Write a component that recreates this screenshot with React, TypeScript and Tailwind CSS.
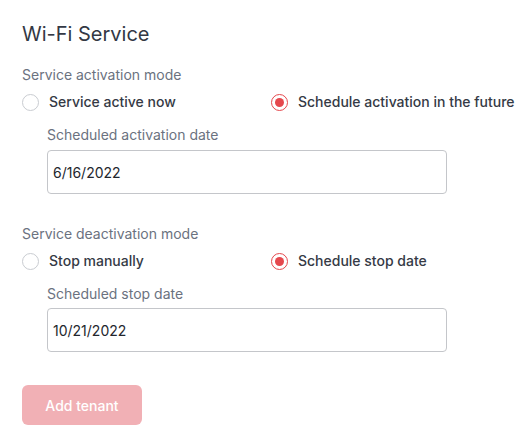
import React from "react";

function Radio({ checked, label }: { checked: boolean; label: string }) {
  return (
    <div className="flex items-center gap-[10px]">
      {checked ? (
        <span className="w-[17px] h-[17px] rounded-full border-[1.5px] border-[#e5484d] flex items-center justify-center">
          <span className="w-[9px] h-[9px] rounded-full bg-[#e5484d]" />
        </span>
      ) : (
        <span className="w-[17px] h-[17px] rounded-full border border-[#c9ccd1] bg-white" />
      )}
      <span className="text-[14px] leading-[20px] font-medium text-[#353a45]">{label}</span>
    </div>
  );
}

function DateInput({ value }: { value: string }) {
  return (
    <div className="w-[400px] h-[44px] border border-[#c4c6ca] rounded-[4px] flex items-center pl-[5px] text-[14px] text-[#23262d]">
      {value}
    </div>
  );
}

export default function App() {
  return (
    <div className="w-[530px] h-[441px] bg-white pl-[22px] pt-[20px]" style={{ fontFamily: "Inter, 'Noto Sans', sans-serif" }}>
      <h1 className="text-[20px] leading-[28px] text-[#333844] font-normal">Wi-Fi Service</h1>

      <div className="mt-[17px] text-[14px] leading-[20px] text-[#6b7280]">Service activation mode</div>
      <div className="mt-[7px] flex">
        <div className="w-[249px]">
          <Radio checked={false} label="Service active now" />
        </div>
        <Radio checked={true} label="Schedule activation in the future" />
      </div>
      <div className="pl-[25px]">
        <div className="mt-[13px] text-[14px] leading-[20px] text-[#6b7280]">Scheduled activation date</div>
        <div className="mt-[5px]">
          <DateInput value="6/16/2022" />
        </div>
      </div>

      <div className="mt-[30px] text-[14px] leading-[20px] text-[#6b7280]">Service deactivation mode</div>
      <div className="mt-[7px] flex">
        <div className="w-[249px]">
          <Radio checked={false} label="Stop manually" />
        </div>
        <Radio checked={true} label="Schedule stop date" />
      </div>
      <div className="pl-[25px]">
        <div className="mt-[13px] text-[14px] leading-[20px] text-[#6b7280]">Scheduled stop date</div>
        <div className="mt-[4px]">
          <DateInput value="10/21/2022" />
        </div>
      </div>

      <button className="mt-[33px] w-[120px] h-[40px] rounded-[6px] bg-[#f1b0b5] text-white text-[14px] font-medium">
        Add tenant
      </button>
    </div>
  );
}
